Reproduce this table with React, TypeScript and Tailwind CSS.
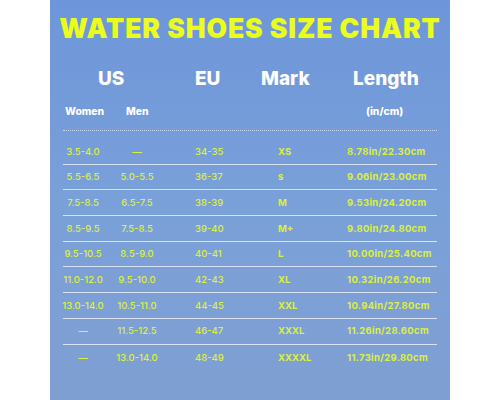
import React from "react";

type Row = {
  women: string;
  men: string;
  eu: string;
  mark: string;
  length: string;
};

const rows: Row[] = [
  { women: "3.5-4.0", men: "—", eu: "34-35", mark: "XS", length: "8.78in/22.30cm" },
  { women: "5.5-6.5", men: "5.0-5.5", eu: "36-37", mark: "s", length: "9.06in/23.00cm" },
  { women: "7.5-8.5", men: "6.5-7.5", eu: "38-39", mark: "M", length: "9.53in/24.20cm" },
  { women: "8.5-9.5", men: "7.5-8.5", eu: "39-40", mark: "M+", length: "9.80in/24.80cm" },
  { women: "9.5-10.5", men: "8.5-9.0", eu: "40-41", mark: "L", length: "10.00in/25.40cm" },
  { women: "11.0-12.0", men: "9.5-10.0", eu: "42-43", mark: "XL", length: "10.32in/26.20cm" },
  { women: "13.0-14.0", men: "10.5-11.0", eu: "44-45", mark: "XXL", length: "10.94in/27.80cm" },
  { women: "—", men: "11.5-12.5", eu: "46-47", mark: "XXXL", length: "11.26in/28.60cm" },
  { women: "—", men: "13.0-14.0", eu: "48-49", mark: "XXXXL", length: "11.73in/29.80cm" },
];

export default function App() {
  return (
    <div className="w-[500px] h-[400px] bg-white flex justify-center font-['Inter',sans-serif]">
      <div className="w-[400px] h-[400px] bg-gradient-to-b from-[#6d96da] via-[#7aa0d9] to-[#7f9fd2] flex flex-col">
        {/* title */}
        <div className="h-[56px] flex items-center justify-center">
          <h1 className="text-[26.5px] font-black text-[#ebfd1c] tracking-[0.9px] leading-none whitespace-nowrap">
            WATER SHOES SIZE CHART
          </h1>
        </div>

        {/* column heads */}
        <div className="relative h-[50px] text-white font-extrabold text-[19px] leading-none">
          <span className="absolute left-[48px] top-[13px]">US</span>
          <span className="absolute left-[145px] top-[13px]">EU</span>
          <span className="absolute left-[211px] top-[13px]">Mark</span>
          <span className="absolute left-[303px] top-[13px]">Length</span>
        </div>
        <div className="relative h-[16px] text-white font-extrabold text-[10.3px] leading-none">
          <span className="absolute left-[15px] top-0">Women</span>
          <span className="absolute left-[76px] top-0">Men</span>
          <span className="absolute left-[316px] top-0">(in/cm)</span>
        </div>

        <div className="mx-[13px] mt-[8px] border-t-[1.5px] border-dotted border-white/60" />

        <div className="mx-[13px] mt-[8px] flex flex-col">
          {rows.map((r, i) => (
            <div
              key={i}
              className={
                "h-[25.7px] flex items-center text-[#dcf03c] text-[9.5px] leading-none whitespace-nowrap " +
                (i < rows.length - 1 ? "border-b-[1.5px] border-white/70" : "")
              }
            >
              <span className="w-[40px] flex justify-center font-medium">{r.women}</span>
              <span className="w-[68px] flex justify-center font-medium">{r.men}</span>
              <span className="w-[107px] pl-[24px] font-medium">{r.eu}</span>
              <span className="w-[69px] font-bold">{r.mark}</span>
              <span className="font-bold tracking-[0.3px]">{r.length}</span>
            </div>
          ))}
        </div>
      </div>
    </div>
  );
}
